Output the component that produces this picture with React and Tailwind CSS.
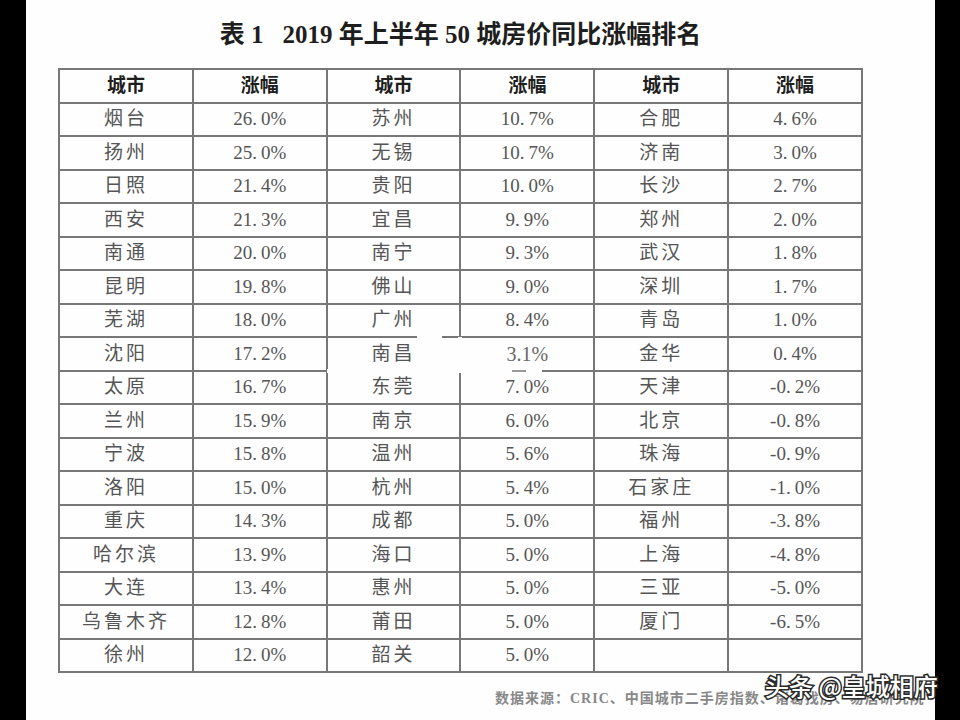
const rows = [
  ["烟台", "26.0", "苏州", "10.7", "合肥", "4.6"],
  ["扬州", "25.0", "无锡", "10.7", "济南", "3.0"],
  ["日照", "21.4", "贵阳", "10.0", "长沙", "2.7"],
  ["西安", "21.3", "宜昌", "9.9", "郑州", "2.0"],
  ["南通", "20.0", "南宁", "9.3", "武汉", "1.8"],
  ["昆明", "19.8", "佛山", "9.0", "深圳", "1.7"],
  ["芜湖", "18.0", "广州", "8.4", "青岛", "1.0"],
  ["沈阳", "17.2", "南昌", "3.1", "金华", "0.4"],
  ["太原", "16.7", "东莞", "7.0", "天津", "-0.2"],
  ["兰州", "15.9", "南京", "6.0", "北京", "-0.8"],
  ["宁波", "15.8", "温州", "5.6", "珠海", "-0.9"],
  ["洛阳", "15.0", "杭州", "5.4", "石家庄", "-1.0"],
  ["重庆", "14.3", "成都", "5.0", "福州", "-3.8"],
  ["哈尔滨", "13.9", "海口", "5.0", "上海", "-4.8"],
  ["大连", "13.4", "惠州", "5.0", "三亚", "-5.0"],
  ["乌鲁木齐", "12.8", "莆田", "5.0", "厦门", "-6.5"],
  ["徐州", "12.0", "韶关", "5.0", "", ""],
];

const Pct = ({ value }) => {
  if (!value) return null;
  const [a, b] = value.split(".");
  return (
    <span>
      {a}.<span className="ml-[4px]">{b}</span>%
    </span>
  );
};

const cell = "border-2 border-[#777] text-center align-middle";

const App = () => {
  return (
    <div className="relative flex w-[960px] h-[720px] bg-black overflow-hidden font-['Liberation_Serif','Noto_Sans_CJK_SC',serif]">
      <div className="w-[26px] shrink-0 bg-black" />
      <div className="w-[909px] shrink-0 bg-[#fefefe] overflow-hidden">
        <div className="ml-[32px] w-[805px]">
          <h1 className="pt-[19px] h-[68px] text-center text-[25px] leading-[32px] font-bold text-[#1e1e1e] whitespace-pre">
            表 1{"   "}2019 年上半年 50 城房价同比涨幅排名
          </h1>
          <table className="w-[805px] table-fixed border-collapse text-[19px] text-[#555]">
            <thead>
              <tr className="h-[33.5px] font-bold text-[#1e1e1e]">
                <th className={cell}>城市</th>
                <th className={cell}>涨幅</th>
                <th className={cell}>城市</th>
                <th className={cell}>涨幅</th>
                <th className={cell}>城市</th>
                <th className={cell}>涨幅</th>
              </tr>
            </thead>
            <tbody>
              {rows.map((r, i) => {
                const special = r[2] === "南昌";
                return (
                  <tr key={i} className="h-[33.5px]">
                    <td className={cell + " tracking-[3px]"}>{r[0]}</td>
                    <td className={cell}>
                      <Pct value={r[1]} />
                    </td>
                    {special ? (
                      <td className={cell + " relative tracking-[3px]"}>
                        {r[2]}
                        {/* smudge over the grid lines */}
                        <span className="absolute left-[89px] w-[25px] top-[-3px] h-[4px] bg-[#fefefe]" />
                        <span className="absolute right-[-3px] w-[4px] top-[-1px] bottom-[-1px] bg-[#fefefe]" />
                        <span className="absolute left-[-1px] right-[-2px] bottom-[-3px] h-[4px] bg-[#fefefe]" />
                      </td>
                    ) : (
                      <td className={cell + " tracking-[3px]"}>{r[2]}</td>
                    )}
                    {special ? (
                      <td className={cell + " relative text-[#666] text-[20px]"}>
                        3.1%
                        <span className="absolute left-[-2px] w-[83px] bottom-[-3px] h-[4px] bg-[#fefefe]" />
                        <span className="absolute left-[51px] w-[14px] bottom-[-2px] h-[2px] bg-[#999]" />
                      </td>
                    ) : (
                      <td className={cell}>
                        <Pct value={r[3]} />
                      </td>
                    )}
                    <td className={cell + " tracking-[3px]"}>{r[4]}</td>
                    <td className={cell}>
                      <Pct value={r[5]} />
                    </td>
                  </tr>
                );
              })}
            </tbody>
          </table>
          <p className="mt-[15px] ml-[437px] whitespace-nowrap text-[14px] font-bold tracking-[1px] text-[#888]">
            数据来源：CRIC、中国城市二手房指数、诸葛找房、易居研究院
          </p>
        </div>
      </div>
      <div className="flex-1 bg-black" />
      <div className="absolute left-[765px] top-[670px] whitespace-nowrap font-['Noto_Sans_CJK_SC',sans-serif] text-[24px] font-medium leading-[32px] text-white [-webkit-text-stroke:3px_#2a2a2a] [paint-order:stroke_fill]">
        头条 @皇城相府
      </div>
    </div>
  );
};

export default App;
